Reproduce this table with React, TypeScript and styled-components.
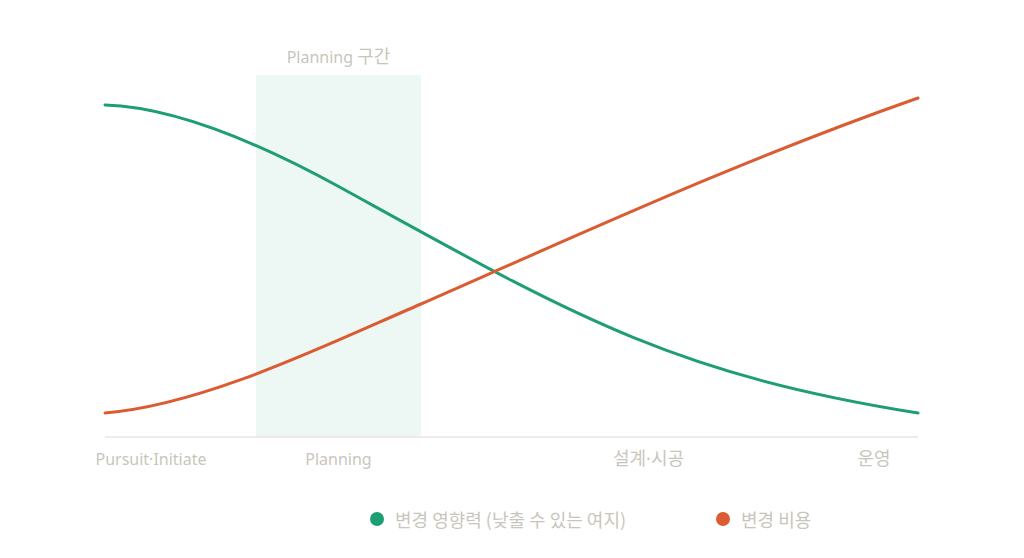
import React from "react";
import styled, { createGlobalStyle } from "styled-components";

const GlobalStyle = createGlobalStyle`
  html, body { margin: 0; padding: 0; background: #ffffff; }
  body { font-family: "Noto Sans", "Noto Sans CJK KR", sans-serif; }
`;

const Page = styled.div`
  width: 1024px;
  height: 558px;
  display: flex;
  flex-direction: column;
  background: #ffffff;
  overflow: hidden;
`;

const ChartSvg = styled.svg`
  display: block;
  width: 1024px;
  height: 500px;
  flex: none;
`;

const AxisText = styled.text<{ $ko?: boolean }>`
  font-family: "Noto Sans", "Noto Sans CJK KR", sans-serif;
  font-size: ${(p) => (p.$ko ? "18px" : "16px")};
  fill: #c8c6bc;
`;

const KoSpan = styled.tspan`
  font-family: "Noto Sans CJK KR", sans-serif;
  font-size: 18px;
`;

const Legend = styled.div`
  display: flex;
  align-items: center;
  gap: 90px;
  padding: 7px 0 0 370px;
`;

const LegendItem = styled.div`
  display: flex;
  align-items: center;
  gap: 11px;
  font-family: "Noto Sans CJK KR", "Noto Sans", sans-serif;
  font-size: 18px;
  line-height: 24px;
  color: #c8c6bc;
`;

const Dot = styled.span<{ $color: string }>`
  width: 14px;
  height: 14px;
  border-radius: 50%;
  background: ${(p) => p.$color};
  flex: none;
`;

const GREEN = "#1f9e74";
const ORANGE = "#db5b32";

const greenPath =
  "M105,105 C175,107 260,143.3 340,187.3 C570,313.8 668,373 918,413";
const orangePath =
  "M105,413 C205,405 331,342.7 421,304 C591,229.2 748,157.5 918,98";

const axisLabels = [
  { x: 151, text: "Pursuit·Initiate", ko: false },
  { x: 338.5, text: "Planning", ko: false },
  { x: 648.5, text: "설계·시공", ko: true },
  { x: 874, text: "운영", ko: true },
];

export default function App() {
  return (
    <Page>
      <GlobalStyle />
      <ChartSvg viewBox="0 0 1024 500">
        <rect x={256} y={75} width={165} height={362} fill="#edf7f3" />
        <AxisText x={338.5} y={63} textAnchor="middle">
          Planning <KoSpan>구간</KoSpan>
        </AxisText>
        <line x1={105} y1={437} x2={918} y2={437} stroke="#e6e6e4" strokeWidth={1.5} />
        <path d={greenPath} fill="none" stroke={GREEN} strokeWidth={3} strokeLinecap="round" />
        <path d={orangePath} fill="none" stroke={ORANGE} strokeWidth={3} strokeLinecap="round" />
        {axisLabels.map((l) => (
          <AxisText key={l.text} x={l.x} y={465} textAnchor="middle" $ko={l.ko}>
            {l.text}
          </AxisText>
        ))}
      </ChartSvg>
      <Legend>
        <LegendItem>
          <Dot $color={GREEN} />
          변경 영향력 (낮출 수 있는 여지)
        </LegendItem>
        <LegendItem>
          <Dot $color={ORANGE} />
          변경 비용
        </LegendItem>
      </Legend>
    </Page>
  );
}
